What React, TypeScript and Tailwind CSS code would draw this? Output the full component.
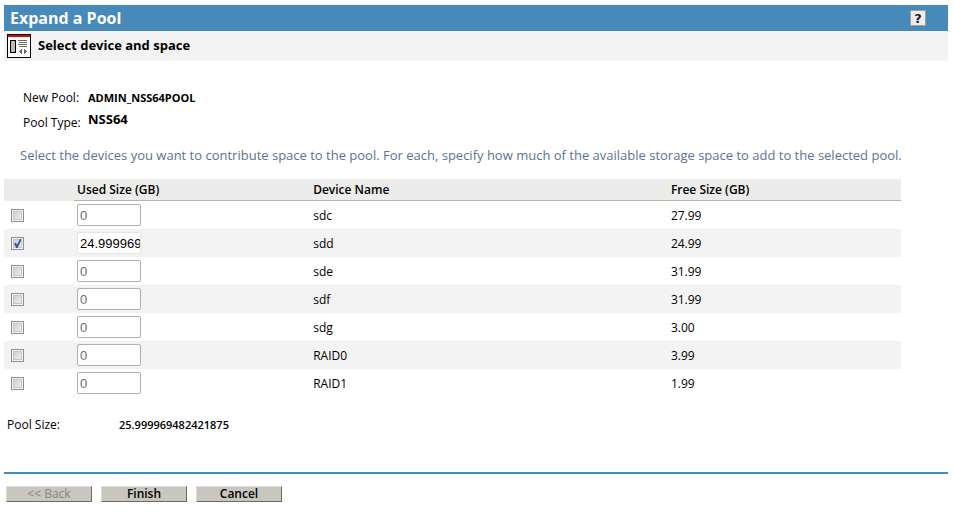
import { useState } from 'react';
import type { FC } from 'react';

interface Device {
    name: string;
    free: string;
    used: string;
    selected: boolean;
}

const DEVICES: Device[] = [
    { name: 'sdc', free: '27.99', used: '0', selected: false },
    { name: 'sdd', free: '24.99', used: '24.999969482421875', selected: true },
    { name: 'sde', free: '31.99', used: '0', selected: false },
    { name: 'sdf', free: '31.99', used: '0', selected: false },
    { name: 'sdg', free: '3.00', used: '0', selected: false },
    { name: 'RAID0', free: '3.99', used: '0', selected: false },
    { name: 'RAID1', free: '1.99', used: '0', selected: false },
];

const WizardIcon: FC = () => (
    <svg width="24" height="24" viewBox="0 0 24 24" shapeRendering="crispEdges" aria-hidden="true">
        <rect width="24" height="24" fill="#000" />
        <rect x="1" y="1" width="22" height="22" fill="#fff" />
        <rect x="1" y="1" width="22" height="2" fill="#e60000" />
        <rect x="3" y="6" width="6" height="13" fill="#000" />
        <rect x="4" y="7" width="4" height="11" fill="#bdbdae" />
        <path d="M11 6h9v1h-9zM12 8h8v1h-8zM11 10h9v1h-9zM12 12h8v1h-8z" fill="#6b6b60" />
        <path
            d="M14 15h1v5h-1zM13 16h1v3h-1zM12 17h1v1h-1zM17 15h1v5h-1zM18 16h1v3h-1zM19 17h1v1h-1z"
            fill="#6b6b60"
        />
    </svg>
);

interface DeviceRowProps {
    device: Device;
    onToggle: () => void;
    onChange: (used: string) => void;
}

const DeviceRow: FC<DeviceRowProps> = ({ device, onToggle, onChange }) => (
    <tr className="h-7 even:bg-[#f3f3f3]">
        <td className="pl-[7px]">
            <span className="relative block h-[13px] w-[13px]">
                <input
                    type="checkbox"
                    aria-label={`Select ${device.name}`}
                    checked={device.selected}
                    onChange={onToggle}
                    className="block h-[13px] w-[13px] appearance-none border border-[#8e8f8f] bg-linear-to-br from-[#c3c8d0] to-[#f6f6f6] shadow-[inset_0_0_0_1px_#f4f4f4,inset_0_0_0_2px_#c4c8cc]"
                />
                {device.selected && (
                    <svg
                        viewBox="0 0 13 13"
                        className="pointer-events-none absolute inset-0 h-[13px] w-[13px]"
                        aria-hidden="true"
                    >
                        <path d="M3 6.6L4.8 5.6L6 7.8L8.8 2L10.6 2.4L6.6 11L5.2 11Z" fill="#405797" />
                    </svg>
                )}
            </span>
        </td>
        <td className="px-[3px]">
            <input
                type="text"
                aria-label={`Used size of ${device.name}`}
                value={device.used}
                disabled={!device.selected}
                onChange={(e) => onChange(e.target.value)}
                className="block h-[22px] w-16 rounded-[2px] border border-[#e3e6ec] bg-white pl-0.5 font-['Liberation_Sans',sans-serif] text-[13px] text-black disabled:border-[#b0b0b0] disabled:text-[#6d6d6d]"
            />
        </td>
        <td className="px-1.5 pt-0.5">{device.name}</td>
        <td className="px-[5px] pt-0.5">{device.free}</td>
    </tr>
);

const BUTTON_CLASS =
    'flex h-4 w-[86px] items-center justify-center border border-t-[#dedcd4] border-l-[#dedcd4] border-r-[#6b6b63] border-b-[#6b6b63] bg-[#c8c6be] text-xs font-semibold disabled:font-normal disabled:text-[#858580]';

export default function App() {
    const [devices, setDevices] = useState(DEVICES);

    const update = (name: string, patch: Partial<Device>) =>
        setDevices((list) => list.map((d) => (d.name === name ? { ...d, ...patch } : d)));

    return (
        <main className="pt-[5px] pr-1.5 pl-1 font-['Open_Sans','Noto_Sans',sans-serif] text-xs text-black">
            <header>
                <div className="flex h-[26px] items-center justify-between bg-[#478aba] pr-[22px] pl-1.5">
                    <h1 className="text-base font-bold text-white">Expand a Pool</h1>
                    <button
                        type="button"
                        aria-label="Help"
                        className="flex h-4 w-4 items-center justify-center border border-[#a39e94] bg-[#eeeeee] font-['DejaVu_Sans',sans-serif] text-[13px] leading-none font-bold text-[#222233]"
                    >
                        ?
                    </button>
                </div>
                <div className="flex h-[30px] items-center gap-[7px] bg-[#f3f3f3] pl-[3px]">
                    <WizardIcon />
                    <h2 className="text-[13px] font-bold">Select device and space</h2>
                </div>
            </header>

            <dl className="mt-[25px] grid grid-cols-[65px_1fr] pl-[19px]">
                <dt className="leading-6">New Pool:</dt>
                <dd className="text-[11px] leading-6 font-bold">ADMIN_NSS64POOL</dd>
                <dt className="pt-1 leading-[18px]">Pool Type:</dt>
                <dd className="text-[13px] leading-[18px] font-bold">NSS64</dd>
            </dl>

            <p className="mt-[13px] pl-4 text-[13px] leading-5 text-[#5b7393]">
                Select the devices you want to contribute space to the pool. For each, specify how much of the available
                storage space to add to the selected pool.
            </p>

            <table className="mt-3.5 w-[95%] table-fixed border-separate border-spacing-0 text-left">
                <colgroup>
                    <col className="w-[70px]" />
                    <col className="w-[26%]" />
                    <col className="w-[40%]" />
                    <col />
                </colgroup>
                <thead>
                    <tr className="h-[22px] bg-[#ececea]">
                        <td />
                        <th className="border-b border-[#b5b5af] px-[3px] font-semibold">Used Size (GB)</th>
                        <th className="border-b border-[#b5b5af] px-1.5 font-semibold">Device Name</th>
                        <th className="border-b border-[#b5b5af] px-[5px] font-semibold">Free Size (GB)</th>
                    </tr>
                </thead>
                <tbody>
                    {devices.map((device) => (
                        <DeviceRow
                            key={device.name}
                            device={device}
                            onToggle={() => update(device.name, { selected: !device.selected })}
                            onChange={(used) => update(device.name, { used })}
                        />
                    ))}
                </tbody>
            </table>

            <dl className="mt-[18px] grid grid-cols-[112px_1fr] items-center pl-[3px] leading-5">
                <dt>Pool Size:</dt>
                <dd className="text-[11px] font-semibold">25.999969482421875</dd>
            </dl>

            <footer className="mt-[37px] border-t-2 border-[#478aba] pt-3 pl-0.5">
                <div className="flex gap-[9px]">
                    <button type="button" disabled className={BUTTON_CLASS}>
                        &lt;&lt; Back
                    </button>
                    <button type="button" className={BUTTON_CLASS}>
                        Finish
                    </button>
                    <button type="button" className={BUTTON_CLASS}>
                        Cancel
                    </button>
                </div>
            </footer>
        </main>
    );
}
